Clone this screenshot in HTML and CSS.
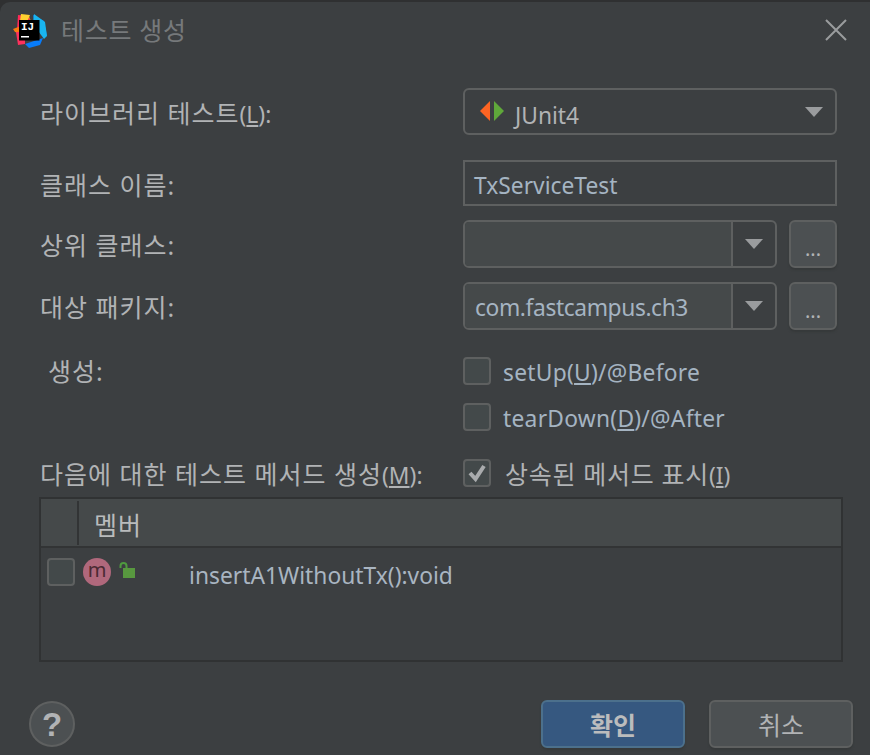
FILE: index.html
```html
<!DOCTYPE html>
<html lang="ko">
<head>
<meta charset="utf-8">
<title>테스트 생성</title>
<link rel="stylesheet" href="styles.css">
</head>
<body>
<div class="dialog">
  <header class="titlebar">
    <svg class="logo" width="34" height="34" viewBox="0 0 34 34">
      <polygon points="6,2 16,2 19,10 9,16" fill="#fc801d"/>
      <polygon points="5,1 15,2 18,8 4,16" fill="#fe2857"/>
      <polygon points="8,0 17,1 14,8 7,7" fill="#ffd02f"/>
      <polygon points="0,15 8,12 9,20 2,18" fill="#f97a12"/>
      <polygon points="3,18 12,18 12,30 5,31" fill="#fe315d"/>
      <polygon points="20,1 31,7 34,22 22,12" fill="#087cfa"/>
      <polygon points="21,0 32,8 34,22 31,25 20,10" fill="#19b5f0"/>
      <polygon points="12,30 30,24 27,31 16,34" fill="#087cfa"/>
      <rect x="6" y="6" width="20.500" height="20.500" fill="#000"/>
      <text x="8" y="16" class="logo-text">IJ</text>
      <rect x="8" y="22" width="8" height="1.500" fill="#fff"/>
    </svg>
    <span class="title">테스트 생성</span>
    <svg class="close" width="22" height="22" viewBox="0 0 22 22"><path d="M1 1 21 21M21 1 1 21" stroke="#9a9c9e" stroke-width="2" fill="none"/></svg>
  </header>

  <div class="row row-lib">
    <label class="label">라이브러리 테스트<span class="mn">(<u>L</u>):</span></label>
    <div class="field select">
      <svg class="junit" width="26" height="20" viewBox="0 0 26 20"><polygon points="11,0 11,20 1,10" fill="#fc6423"/><polygon points="15,0 15,20 25,10" fill="#5fa83a"/></svg>
      <span class="value">JUnit4</span>
      <span class="arrow big"></span>
    </div>
  </div>

  <div class="row row-name">
    <label class="label">클래스 이름:</label>
    <div class="field text"><span class="value blue">TxServiceTest</span></div>
  </div>

  <div class="row row-super">
    <label class="label">상위 클래스:</label>
    <div class="combo-wrap">
      <div class="field combo">
        <div class="combo-input"></div>
        <div class="combo-btn"><span class="arrow"></span></div>
      </div>
      <button class="dots">...</button>
    </div>
  </div>

  <div class="row row-pack">
    <label class="label">대상 패키지:</label>
    <div class="combo-wrap">
      <div class="field combo">
        <div class="combo-input"><span class="value blue package">com.fastcampus.ch3</span></div>
        <div class="combo-btn"><span class="arrow"></span></div>
      </div>
      <button class="dots">...</button>
    </div>
  </div>

  <div class="row row-gen">
    <label class="label indent">생성:</label>
    <div class="checks">
      <div class="check-row"><span class="box"></span><span class="value blue">setUp(<u>U</u>)/@Before</span></div>
      <div class="check-row"><span class="box"></span><span class="value blue">tearDown(<u>D</u>)/@After</span></div>
    </div>
  </div>

  <div class="row row-members">
    <label class="label">다음에 대한 테스트 메서드 생성<span class="mn">(<u>M</u>):</span></label>
    <div class="check-row tight">
      <span class="box checked">
        <svg width="22" height="20" viewBox="0 0 22 20"><path d="M4 10 9.500 16 18 3" stroke="#a9abad" stroke-width="4" fill="none"/></svg>
      </span>
      <span class="value gray">상속된 메서드 표시<span class="mn">(<u>I</u>)</span></span>
    </div>
  </div>

  <div class="table">
    <div class="thead">
      <div class="th-check"></div>
      <div class="th-name">멤버</div>
    </div>
    <div class="tr">
      <span class="box"></span>
      <span class="method">m</span>
      <svg class="lock" width="18" height="18" viewBox="0 0 18 18"><path d="M2.500 6V4a3 3 0 0 1 6 0V6" stroke="#4f9a3f" stroke-width="2" fill="none"/><rect x="5" y="6" width="12" height="10" fill="#58983f"/></svg>
      <span class="sig">insertA1WithoutTx():void</span>
    </div>
  </div>

  <footer class="footer">
    <button class="help">?</button>
    <div class="actions">
      <button class="btn primary">확인</button>
      <button class="btn">취소</button>
    </div>
  </footer>
</div>
</body>
</html>
```
FILE: styles.css
```css
* { box-sizing: border-box; }
html, body { margin: 0; padding: 0; background: #2f3031; }
body { width: 870px; height: 755px; overflow: hidden; font-family: "Noto Sans", "Noto Sans CJK KR", sans-serif; font-size: 22px; color: #b4b6b8; }
.dialog { width: 870px; height: 753px; margin-top: 2px; padding: 0 17px 0 40px; background: #3c3f41; border-top-left-radius: 10px; display: flex; flex-direction: column; }
.titlebar { height: 86px; margin-left: -27px; display: flex; align-items: flex-start; padding-top: 12px; }
.logo { flex: none; }
.logo-text { font-family: "Liberation Mono", monospace; font-weight: 700; font-size: 11px; fill: #fff; }
.title { margin-left: 14px; margin-top: -1px; font-size: 25px; line-height: 34px; color: #76797b; letter-spacing: 0.7px; }
.close { margin-left: auto; margin-top: 5px; margin-right: 6px; }
.row { display: flex; align-items: flex-start; }
.label { width: 423px; flex: none; font-size: 25px; line-height: 34px; color: #b1b3b5; white-space: nowrap; letter-spacing: 1px; }
.label.indent { padding-left: 8px; }
.mn { font-size: 22.800px; letter-spacing: 0; }
.value { font-size: 22.800px; line-height: 30px; white-space: nowrap; }
.blue { color: #a5b4c2; }
.package { letter-spacing: -0.4px; }
.gray { color: #b1b3b5; font-size: 25px; letter-spacing: 0.7px; }
.field { width: 374px; border: 2px solid #5e6060; background: #3c3f41; display: flex; align-items: center; }
.select { height: 47px; border-radius: 6px; padding: 0 12px 0 14px; }
.select .value { color: #b1b3b5; margin-left: 10px; padding-top: 8px; }
.junit { flex: none; margin-top: -1px; }
.arrow { width: 0; height: 0; border-left: 9px solid transparent; border-right: 9px solid transparent; border-top: 10px solid #9a9c9e; display: block; }
.select .arrow { margin-left: auto; }
.row-lib { height: 72px; }
.row-lib .label { padding-top: 8px; }
.text { height: 46px; padding: 0 9px; }
.text .value { padding-top: 6px; }
.row-name { height: 60px; }
.row-name .label { padding-top: 8px; }
.row-super { height: 62px; }
.row-super .label { padding-top: 8px; }
.row-pack { height: 75px; }
.row-pack .label { padding-top: 8px; }
.combo-wrap { width: 374px; display: flex; justify-content: space-between; }
.combo { width: 314px; height: 48px; border-radius: 6px; overflow: hidden; }
.combo-input { flex: 1; height: 100%; background: #45494a; padding: 8px 10px 0; }
.combo-btn { width: 44px; height: 100%; border-left: 2px solid #5e6060; display: flex; align-items: center; justify-content: center; }
.dots { width: 48px; height: 48px; border: 2px solid #5e6060; border-radius: 6px; background: #4c5052; color: #b1b3b5; font-family: inherit; font-size: 20px; line-height: 1; padding: 10px 0 0; box-shadow: 0 2px 2px #36393a; }
.row-gen { height: 102px; }
.row-gen .label { margin-top: -3px; }
.checks { display: flex; flex-direction: column; gap: 19px; }
.check-row { display: flex; align-items: center; height: 27px; }
.box { width: 28px; height: 28px; flex: none; border: 2px solid #5e6060; border-radius: 4px; background: #43494a; display: flex; align-items: center; justify-content: center; }
.check-row .value { margin-left: 12px; padding-top: 5px; letter-spacing: 0.25px; }
.check-row.tight .value { margin-left: 14px; padding-top: 4px; letter-spacing: 0.7px; }
.row-members { height: 38px; }
.row-members .label { margin-top: -2px; }
.table { width: 804px; height: 165px; margin-left: -1px; border: 2px solid #303233; background: #3c3f41; flex: none; }
.thead { height: 49px; background: #45494a; border-bottom: 2px solid #323435; display: flex; padding: 2px 0 0; }
.th-check { width: 38px; height: 44px; border-right: 2px solid #323435; }
.th-name { padding-left: 15px; font-size: 25px; letter-spacing: 1px; line-height: 49px; color: #b9bbbc; }
.tr { display: flex; align-items: flex-start; padding: 10px 0 0 6px; height: 60px; }
.method { width: 28px; height: 28px; border-radius: 50%; background: #b0687c; color: #4b2a33; font-size: 20px; line-height: 24px; text-align: center; margin-left: 8px; flex: none; }
.lock { margin-left: 7px; margin-top: 4px; flex: none; }
.sig { margin-left: 53px; font-size: 22.800px; line-height: 32px; color: #a9b5c1; white-space: nowrap; margin-top: 2px; }
.footer { display: flex; align-items: center; justify-content: space-between; height: 48px; margin-top: 38px; margin-left: -11px; }
.help { width: 46px; height: 46px; border-radius: 50%; border: 2px solid #5e6060; background: #4c5052; color: #b1b3b5; font-family: "Liberation Sans", sans-serif; font-size: 33px; font-weight: 700; padding: 0; line-height: 1; }
.actions { display: flex; gap: 24px; }
.btn { width: 144px; height: 48px; border: 2px solid #5e6060; border-radius: 6px; background: #4c5052; color: #b1b3b5; font-family: inherit; font-size: 25px; padding: 0; box-shadow: 0 2px 2px #36393a; }
.btn.primary { background: #365880; border-color: #4c708c; font-weight: 700; color: #bbbcbd; }
```
